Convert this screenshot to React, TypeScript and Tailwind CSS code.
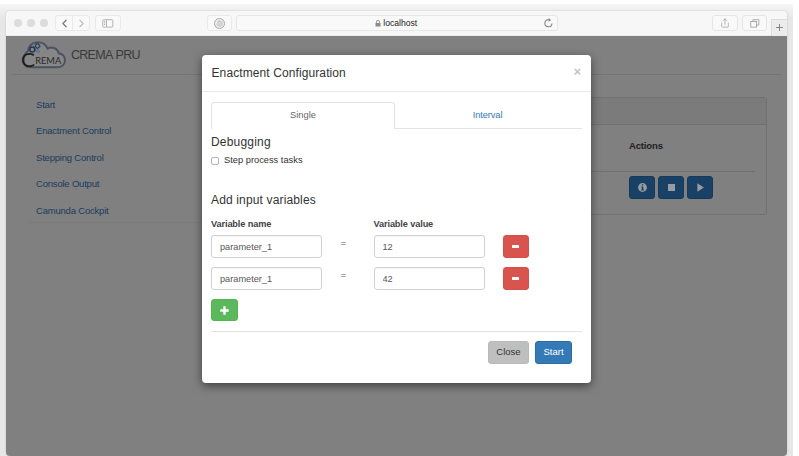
import React from "react";
import { ChevronLeft, ChevronRight, Hand, Share } from "lucide-react";

const NAV_ITEMS = ["Start", "Enactment Control", "Stepping Control", "Console Output", "Camunda Cockpit"];

const VARIABLES = [
  { name: "parameter_1", value: "12" },
  { name: "parameter_1", value: "42" },
];

function SidebarIcon() {
  return (
    <svg width="12" height="9" viewBox="0 0 12 9" fill="none" stroke="#b4b4b4" strokeWidth="1">
      <rect x="0.8" y="0.7" width="10" height="7.4" rx="0.8" />
      <path d="M4.5 0.7v7.4M2 2.5h1.2M2 4h1.2M2 5.5h1.2" />
    </svg>
  );
}

function TabsIcon() {
  return (
    <svg width="10" height="9" viewBox="0 0 10 9" fill="none" stroke="#999" strokeWidth="0.8">
      <rect x="0.8" y="2.5" width="5.8" height="5.6" />
      <path d="M3 2.5V0.7h5.8v5.4H6.6" />
    </svg>
  );
}

function LockIcon() {
  return (
    <svg width="6" height="7" viewBox="0 0 6 7">
      <path d="M1.4 3.2V2a1.6 1.6 0 0 1 3.2 0v1.2" fill="none" stroke="#8c8c8c" strokeWidth="0.9" />
      <rect x="0.5" y="3" width="5" height="3.6" rx="0.4" fill="#8c8c8c" />
    </svg>
  );
}

function ReloadIcon() {
  return (
    <svg width="9" height="10" viewBox="0 0 9 10">
      <path d="M7.9 5.4a3.5 3.5 0 1 1-3.4-3.6h1" fill="none" stroke="#858585" strokeWidth="1.1" />
      <path d="M4.6 0L7.2 1.9L4.6 3.8z" fill="#858585" />
    </svg>
  );
}

function BrowserBar() {
  return (
    <div className="flex h-[24.5px] shrink-0 items-center bg-[#f7f7f7] pl-2 shadow-[inset_0_-1px_0_#ececec]">
      <div className="flex gap-[5px]">
        <span className="size-2 rounded-full bg-[#dcdcdc]" />
        <span className="size-2 rounded-full bg-[#dcdcdc]" />
        <span className="size-2 rounded-full bg-[#dcdcdc]" />
      </div>
      <div className="ml-[7px] flex h-4 w-[35px] items-center rounded-[3px] border border-[#e9e9e9] bg-[#f9f9f9]">
        <div className="flex h-full flex-1 items-center justify-center border-r border-[#e9e9e9]">
          <ChevronLeft size={13} strokeWidth={2.2} color="#777" />
        </div>
        <div className="flex flex-1 items-center justify-center">
          <ChevronRight size={13} strokeWidth={2} color="#bcbcbc" />
        </div>
      </div>
      <div className="ml-[5px] flex h-4 w-[26px] items-center justify-center rounded-[3px] border border-[#e9e9e9] bg-[#f9f9f9]">
        <SidebarIcon />
      </div>
      <div className="ml-[86px] flex h-4 w-[25px] items-center justify-center rounded-[3px] border border-[#e9e9e9] bg-[#f9f9f9]">
        <span className="flex size-[11px] items-center justify-center rounded-full border-[1.5px] border-[#a8a8a8] bg-[#eee]">
          <Hand size={7} strokeWidth={2} color="#c4c4c4" fill="#d4d4d4" />
        </span>
      </div>
      <div className="ml-1 flex h-4 w-[322px] items-center rounded-[3px] border border-[#e6e6e6] bg-[#f9f9f9] pr-1">
        <div className="flex flex-1 items-center justify-center gap-[2.5px] pl-[11px]">
          <LockIcon />
          <span className="text-[8.6px] leading-none text-[#222]">localhost</span>
        </div>
        <ReloadIcon />
      </div>
      <div className="ml-[154px] flex h-4 w-[26px] items-center justify-center rounded-[3px] border border-[#e6e6e6] bg-[#f9f9f9]">
        <Share size={10} strokeWidth={1.8} color="#a3a3a3" />
      </div>
      <div className="ml-1 flex h-4 w-[25px] items-center justify-center rounded-[3px] border border-[#e6e6e6] bg-[#f9f9f9]">
        <TabsIcon />
      </div>
      <div className="ml-auto flex h-[17px] w-4 items-center justify-center self-end border-t border-l border-[#dcdcdc] bg-[#ececec]">
        <svg width="9" height="9" viewBox="0 0 9 9" stroke="#888" strokeWidth="1">
          <path d="M4.5 1v7M1 4.5h7" />
        </svg>
      </div>
    </div>
  );
}

function CremaLogo() {
  return (
    <svg width="46" height="30" viewBox="0 0 46 30">
      <path
        d="M9 27.3 H36 C41 27.3 44 24.3 44 20.3 C44 16.5 41.5 14 37.8 13.3 C36.5 8.5 31 6 26.8 8.7 C24.5 4 20 1.8 15.5 2.4 C10.5 3 7.5 6.5 7 11 C4.5 13 2.2 16 2.2 20.3 C2.2 24.3 5 27.3 9 27.3 Z"
        fill="#868686"
        stroke="#4b5363"
        strokeWidth="2"
      />
      <g fill="none" stroke="#1b3556">
        <circle cx="11.3" cy="9.6" r="2.4" strokeWidth="1.2" />
        <circle cx="11.3" cy="9.6" r="3.3" strokeWidth="0.8" strokeDasharray="1.1 0.9" />
        <circle cx="16.5" cy="6" r="2" strokeWidth="1" />
        <circle cx="16.5" cy="6" r="2.7" strokeWidth="0.7" strokeDasharray="1 0.8" />
        <circle cx="17" cy="11.3" r="1.4" strokeWidth="1" stroke="#35608b" strokeDasharray="1 0.5" />
      </g>
      <text x="0.1" y="27" fontFamily="Lato, sans-serif" fontSize="18.5" fill="#1c1c1c" textLength="14" lengthAdjust="spacingAndGlyphs">
        C
      </text>
      <text x="14.2" y="24.3" fontFamily="Lato, sans-serif" fontSize="9.4" fill="#2a2a2a" textLength="26" lengthAdjust="spacingAndGlyphs">
        REMA
      </text>
    </svg>
  );
}

function ActionButton({ children }: { children: React.ReactNode }) {
  return (
    <button className="flex h-[23px] w-[26px] items-center justify-center rounded-[3px] border border-[#153b5c] bg-[#194165]">
      {children}
    </button>
  );
}

function Page() {
  return (
    <div className="flex-1 bg-[#808080]">
      <header className="mx-[6px] flex h-[39px] items-center border-b border-[#747474] pl-[9px]">
        <CremaLogo />
        <span className="ml-1 pt-px text-[12.5px] tracking-[-0.72px] text-[#3a3a3a] [word-spacing:1px]">CREMA PRU</span>
      </header>
      <div className="flex">
        <nav className="ml-[22px] h-[148px] w-[174px] border-b border-[#7b7b7b] pt-4 pl-2">
          {NAV_ITEMS.map((item) => (
            <a key={item} className="block h-[26.6px] text-[9.5px] leading-[27px] tracking-[-0.2px] text-[#1a3c5d]">
              {item}
            </a>
          ))}
        </nav>
        <main className="mt-[22px] mr-[20px] h-[118px] flex-1 rounded-[3px] border border-[#717171]">
          <div className="h-[27px] border-b border-[#717171] bg-[#7b7b7b]" />
          <div className="mr-[11px] flex h-[47px] items-center border-b border-[#707070] pl-[426px] text-[9.5px] font-bold tracking-[-0.15px] text-[#1d1d1d]">
            <span className="pb-[3px]">Actions</span>
          </div>
          <div className="flex gap-[3px] pt-1 pl-[426px]">
            <ActionButton>
              <svg width="9" height="9" viewBox="0 0 9 9">
                <circle cx="4.5" cy="4.5" r="4.4" fill="#969ca1" />
                <path d="M3.8 1.3h1.5v1.3H3.8zM3.3 3.5h2v3h.6v1H3.2v-1h.6v-2h-.5z" fill="#194165" />
              </svg>
            </ActionButton>
            <ActionButton>
              <span className="size-[7px] bg-[#969ca1]" />
            </ActionButton>
            <ActionButton>
              <svg width="7" height="9" viewBox="0 0 7 9">
                <path d="M0.4 0.3L6.8 4.5L0.4 8.7z" fill="#969ca1" />
              </svg>
            </ActionButton>
          </div>
        </main>
      </div>
    </div>
  );
}

function TextField({ value }: { value: string }) {
  return (
    <input
      className="block h-[23px] w-[111px] rounded-[3px] border border-[#d2d2d2] bg-white px-2 text-[9.2px] text-[#555] shadow-[inset_0_1px_1px_rgba(0,0,0,0.03)]"
      defaultValue={value}
    />
  );
}

function EnactmentModal() {
  return (
    <div className="absolute top-[55px] left-[202px] flex h-[328px] w-[389px] flex-col rounded-[4px] bg-white text-[#333] shadow-[0_3px_10px_rgba(0,0,0,0.5)]">
      <div className="flex h-[37px] shrink-0 items-center justify-between border-b border-[#e8e8e8] pr-[10px] pl-[9.5px]">
        <h4 className="text-[12px] font-medium tracking-[0.1px]">Enactment Configuration</h4>
        <button className="pb-[3px] text-[13px] leading-none font-bold text-[#c4c4c4]">×</button>
      </div>
      <div className="px-[9px] pt-[9.5px]">
        <div className="flex h-[27.5px] text-[9.3px]">
          <div className="flex w-[184px] items-center justify-center rounded-t-[3px] border border-b-0 border-[#e3e3e3] pt-px text-[#666]">
            Single
          </div>
          <div className="flex flex-1 items-center justify-center border-b border-[#e3e3e3] pt-[3px] pr-[2px] tracking-[-0.1px] text-[#337ab7]">
            Interval
          </div>
        </div>
        <h4 className="mt-[5px] text-[12px] leading-4 tracking-[0.2px]">Debugging</h4>
        <label className="mt-1 flex h-3.5 items-center gap-[5px] text-[9.3px]">
          <input type="checkbox" className="size-2 appearance-none rounded-[2px] border border-[#b5b5b5] bg-white" />
          Step process tasks
        </label>
        <h4 className="mt-[24px] text-[12px] leading-4 tracking-[0.15px]">Add input variables</h4>
        <div className="mt-[10px] flex h-3.5 items-center text-[9.2px] font-semibold tracking-[-0.12px] text-[#444]">
          <span className="w-[162.5px]">Variable name</span>
          <span>Variable value</span>
        </div>
        <div className="mt-[3px] flex flex-col gap-[9px]">
          {VARIABLES.map((variable, index) => (
            <div key={index} className="flex h-[23px]">
              <TextField value={variable.name} />
              <span className="w-[51.5px] pl-[18.5px] text-[9.5px] leading-[15px] text-[#555]">=</span>
              <TextField value={variable.value} />
              <button className="ml-[18px] flex h-[23px] w-[26px] items-center justify-center rounded-[3px] border border-[#d6504b] bg-[#d9534f]">
                <span className="h-[2.5px] w-[7px] rounded-[0.5px] bg-white" />
              </button>
            </div>
          ))}
        </div>
        <button className="mt-[9px] flex h-[22px] w-[26.5px] items-center justify-center rounded-[3px] border border-[#55b355] bg-[#5cb85c]">
          <svg width="9" height="9" viewBox="0 0 9 9" stroke="#fff" strokeWidth="2.4">
            <path d="M4.5 0.3v8.4M0.3 4.5h8.4" />
          </svg>
        </button>
        <div className="mt-[10px] flex justify-end gap-[6px] border-t border-[#e3e3e3] pt-[9px] pr-[10px] text-[9.5px]">
          <button className="h-[23px] w-[41px] rounded-[3px] border border-[#b9b9b9] bg-[#bfbfbf] text-[#333]">Close</button>
          <button className="h-[23px] w-[37px] rounded-[3px] border border-[#2e6da4] bg-[#337ab7] text-white">Start</button>
        </div>
      </div>
    </div>
  );
}

export default function App() {
  return (
    <div className="h-[456px] w-[799px] overflow-hidden bg-white pt-[4px] font-['Liberation_Sans',Arial,sans-serif]">
      <div className="h-[460px] w-[793px] bg-linear-to-b from-[#f6f6f6] to-[#e7e7e7] to-[14px] pt-[7px] pr-[6px] pl-[6px]">
        <div className="flex h-[445px] flex-col overflow-hidden rounded-[4px] shadow-[0_0_2px_rgba(0,0,0,0.2)]">
          <BrowserBar />
          <Page />
        </div>
      </div>
      <EnactmentModal />
    </div>
  );
}
